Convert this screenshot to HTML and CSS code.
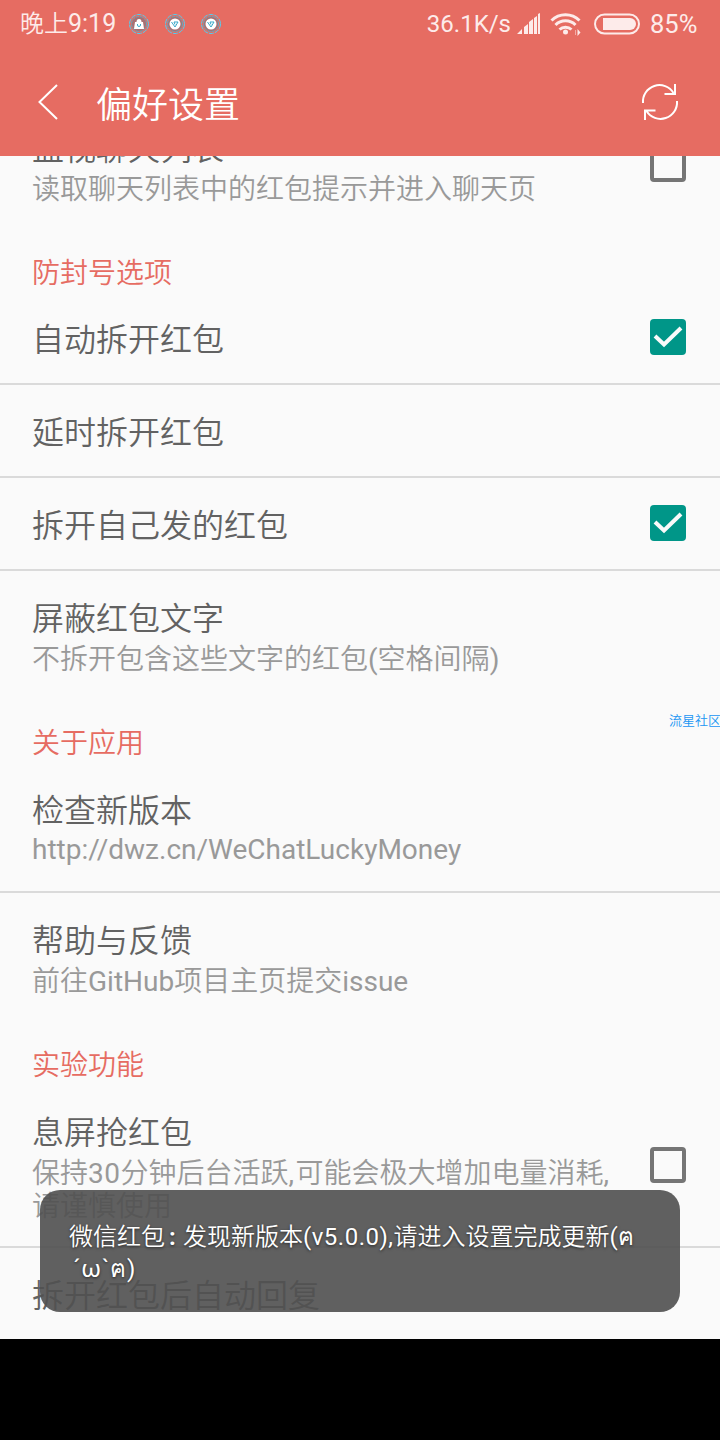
FILE: index.html
```html
<!DOCTYPE html>
<html lang="zh-CN">

<head>
    <meta charset="UTF-8">
    <meta name="viewport" content="width=device-width, initial-scale=1.0">
    <title>偏好设置</title>
    <link rel="stylesheet" href="styles.css">
</head>

<body>
    <header>
        <div class="status-bar">
            <span class="clock">晚上<span class="latin">9:19</span></span>
            <div class="notifications">
                <svg width="22" height="22" viewBox="0 0 22 22">
                    <circle class="ring" cx="11" cy="11" r="9.5" />
                    <circle class="ring-inner" cx="11" cy="11" r="7.5" />
                    <path d="M6 16l1-7h1.500a2.500 3 0 0 1 5 0H15l1 7z" fill="#fff" />
                    <path d="M9.500 11v1a1.500 1.500 0 0 0 3 0v-1" fill="none" stroke="#3aa9c9" />
                </svg>
                <svg width="22" height="22" viewBox="0 0 22 22">
                    <circle class="ring" cx="11" cy="11" r="9.5" />
                    <circle class="ring-inner" cx="11" cy="11" r="7.5" />
                    <circle cx="11" cy="11" r="5.5" fill="#fff" />
                    <path d="M7.500 9l3.500 5 3-5h-4l1 2.500" fill="none" stroke="#3aa9c9" />
                </svg>
                <svg width="22" height="22" viewBox="0 0 22 22">
                    <circle class="ring" cx="11" cy="11" r="9.5" />
                    <circle class="ring-inner" cx="11" cy="11" r="7.5" />
                    <circle cx="11" cy="11" r="5.5" fill="#fff" />
                    <path d="M7.500 9l3.500 5 3-5h-4l1 2.500" fill="none" stroke="#3aa9c9" />
                </svg>
            </div>
            <span class="speed">36.1K/s</span>
            <svg class="signal" width="24" height="22" viewBox="0 0 24 22" fill="#fdebea">
                <path d="M0 21l5-5v5zM7 14l4-3v10H7zM12 9l4-3v15h-4zM17 5l3-2v18h-3zM21 1l2-1v21h-2z" />
            </svg>
            <svg class="wifi" width="32" height="25" viewBox="0 0 32 25" fill="none" stroke="#fdebea" stroke-width="3">
                <path d="M1.500 8.500a20 20 0 0 1 28 0" />
                <path d="M5.500 13a14 14 0 0 1 20 0" />
                <path d="M9.500 17.500a9 9 0 0 1 12 0" />
                <circle cx="15.500" cy="20" r="2.500" fill="#fdebea" stroke="none" />
                <path d="M27.500 17v7l3-3.500z" fill="#fdebea" stroke="none" />
                <path d="M25.500 18v5" stroke-width="1" opacity=".5" />
            </svg>
            <svg class="battery" width="46" height="22" viewBox="0 0 46 22">
                <rect x="1" y="1.500" width="44" height="19" rx="9.500" fill="none" stroke="#fdebea" stroke-width="2" />
                <path d="M9 5h27a6 6 0 0 1 0 12H9z" fill="#fdebea" />
            </svg>
            <span class="percent">85%</span>
        </div>
        <div class="app-bar">
            <svg width="22" height="36" viewBox="0 0 22 36" fill="none" stroke="#fff" stroke-width="2">
                <path d="M20 1L2.500 18 20 35" />
            </svg>
            <h1>偏好设置</h1>
            <svg width="38" height="38" viewBox="0 0 38 38" fill="none" stroke="#fff" stroke-width="2">
                <path d="M2 20A16.500 16.500 0 0 1 32.500 10M34 1v10H23.500" />
                <path d="M36 18A16.500 16.500 0 0 1 5.500 28M4 37V27.500h10.500" />
            </svg>
        </div>
    </header>

    <main>
        <div class="list">
            <div class="item">
                <div class="text">
                    <h3>监视聊天列表</h3>
                    <p>读取聊天列表中的红包提示并进入聊天页</p>
                </div>
                <span class="checkbox"></span>
            </div>

            <h2 class="first">防封号选项</h2>
            <div class="item single divider">
                <div class="text">
                    <h3>自动拆开红包</h3>
                </div>
                <span class="checkbox checked">
                    <svg width="36" height="36" viewBox="0 0 36 36"><path d="M5 17l9 8.500L31 9" /></svg>
                </span>
            </div>
            <div class="item single divider">
                <div class="text">
                    <h3>延时拆开红包</h3>
                </div>
            </div>
            <div class="item single divider">
                <div class="text">
                    <h3>拆开自己发的红包</h3>
                </div>
                <span class="checkbox checked">
                    <svg width="36" height="36" viewBox="0 0 36 36"><path d="M5 17l9 8.500L31 9" /></svg>
                </span>
            </div>
            <div class="item">
                <div class="text">
                    <h3>屏蔽红包文字</h3>
                    <p>不拆开包含这些文字的红包<span class="latin">(</span>空格间隔<span class="latin">)</span></p>
                </div>
            </div>

            <h2>关于应用</h2>
            <div class="item divider">
                <div class="text">
                    <h3>检查新版本</h3>
                    <p class="url latin">http://dwz.cn/WeChatLuckyMoney</p>
                </div>
            </div>
            <div class="item">
                <div class="text">
                    <h3>帮助与反馈</h3>
                    <p>前往<span class="latin">GitHub</span>项目主页提交<span class="latin">issue</span></p>
                </div>
            </div>

            <h2>实验功能</h2>
            <div class="item divider">
                <div class="text">
                    <h3>息屏抢红包</h3>
                    <p>保持<span class="latin number">30</span>分钟后台活跃<span class="latin comma">,</span>可能会极大增加电量消耗<span class="latin comma">,</span><br>请谨慎使用</p>
                </div>
                <span class="checkbox"></span>
            </div>
            <div class="item single">
                <div class="text">
                    <h3>拆开红包后自动回复</h3>
                </div>
            </div>
        </div>
    </main>

    <div class="watermark">流星社区</div>
    <div class="toast">微信红包<span class="colon">:</span>发现新版本<span class="latin version">(v5.0.0),</span>请进入设置完成更新<span class="latin">(ฅ</span><br><span class="latin face">´ω`ฅ)</span></div>
</body>

</html>
```
FILE: styles.css
```css
* {
    margin: 0;
    padding: 0;
    box-sizing: border-box;
}

body {
    position: relative;
    display: flex;
    flex-direction: column;
    height: 1440px;
    padding-bottom: 101px;
    overflow: hidden;
    background-color: #000;
    font-family: Roboto, "Noto Sans CJK SC", sans-serif;
    font-weight: 350;
}

svg {
    display: block;
    flex-shrink: 0;
}

header {
    height: 156px;
    flex-shrink: 0;
    background-color: #e66c62;
    color: #fff;
}

.latin {
    font-weight: 400;
}

.status-bar {
    display: flex;
    align-items: center;
    height: 48px;
    padding: 0 20px;
    font-size: 24px;
    font-weight: 400;
    color: #fdebea;
}

.clock {
    width: 96px;
    font-weight: 350;
    line-height: 46px;
    white-space: nowrap;
}

.clock .latin {
    font-size: 25px;
}

.notifications {
    display: flex;
    gap: 14px;
    margin-left: 12px;
}

.ring {
    fill: none;
    stroke: #4fd0f4;
    stroke-dasharray: 5 1;
}

.ring-inner {
    fill: #a97073;
    stroke: #5fa9c0;
    stroke-dasharray: 3 1;
}

.speed {
    margin-left: auto;
    line-height: 50px;
}

.signal {
    margin-left: 6px;
}

.wifi {
    margin-left: 9px;
}

.battery {
    margin-left: 12px;
}

.percent {
    width: 50px;
    margin-left: 10px;
    font-size: 25.5px;
    line-height: 50px;
}

.app-bar {
    display: flex;
    align-items: center;
    height: 108px;
    padding: 0 41px 0 37px;
}

h1 {
    flex: 1;
    margin-left: 37px;
    padding-top: 7px;
    font-size: 36px;
    font-weight: 350;
    line-height: 54px;
}

main {
    flex: 1;
    overflow: hidden;
    background-color: #fafafa;
}

/* list is scrolled a little under the header */
.list {
    margin-top: -55px;
}

h2 {
    height: 64px;
    padding: 26px 32px 0;
    font-size: 28px;
    font-weight: 350;
    line-height: 38px;
    color: #e66c62;
}

.first {
    height: 63px;
}

.item {
    display: flex;
    align-items: center;
    padding: 0 34px 0 32px;
}

.divider {
    border-bottom: 2px solid #dadada;
}

.text {
    flex: 1;
    padding: 27px 0 23px;
    white-space: nowrap;
}

.single .text {
    padding-bottom: 22px;
}

h3 {
    font-size: 32px;
    font-weight: 350;
    line-height: 42px;
    color: #626262;
}

p {
    margin-top: 3px;
    font-size: 28px;
    line-height: 33px;
    color: #999;
}

.url {
    margin: 1px 0 2px;
}

.number {
    letter-spacing: 0.5px;
}

.comma {
    letter-spacing: 1.5px;
}

.checkbox {
    width: 36px;
    height: 36px;
    flex-shrink: 0;
    margin-bottom: 2px;
    border: 4px solid #757575;
    border-radius: 4px;
}

.checked {
    border: 0;
    background-color: #009688;
}

.checked path {
    fill: none;
    stroke: #fafafa;
    stroke-width: 4;
}

.watermark {
    position: absolute;
    top: 712px;
    right: -1px;
    font-size: 13px;
    line-height: 18px;
    color: #2196f3;
}

.toast {
    position: absolute;
    top: 1190px;
    left: 40px;
    width: 640px;
    height: 122px;
    padding: 31px 30px 0 29px;
    border-radius: 20px;
    background-color: rgba(80, 80, 80, 0.91);
    font-size: 24px;
    line-height: 32px;
    white-space: nowrap;
    color: #fff;
    text-shadow: 0 1px 3px rgba(0, 0, 0, 0.6);
}

.colon {
    display: inline-block;
    width: 18px;
    padding-left: 4px;
    font-weight: 700;
}

.version {
    letter-spacing: 0.5px;
}

.face {
    padding-left: 4px;
    letter-spacing: 0.8px;
}
```
